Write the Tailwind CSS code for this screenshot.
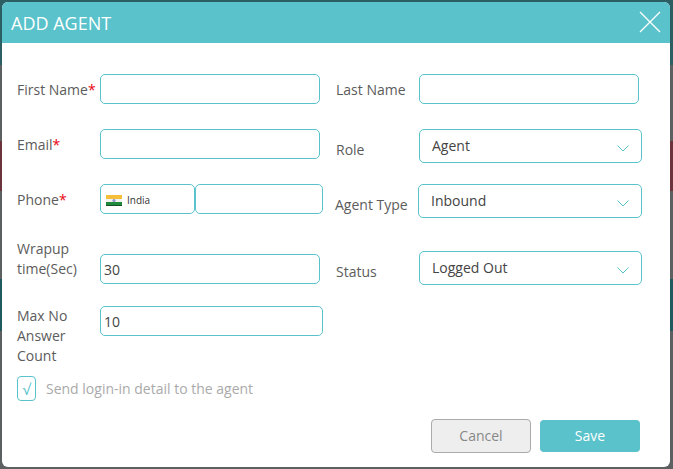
<!doctype html>
<html><head><meta charset="utf-8"><script src="https://cdn.jsdelivr.net/npm/@tailwindcss/browser@4"></script></head>
<body class="relative w-[673px] h-[469px] overflow-hidden bg-[#5c6061] font-['Open_Sans',sans-serif] text-[14px] leading-[20px] text-[#5c5c5c] antialiased">
<div class="absolute inset-0 flex flex-col">
  <div class="h-[65px] bg-[#2b5f63]"></div>
  <div class="h-[76px]"></div>
  <div class="h-[50px] bg-[#6b333b]"></div>
  <div class="h-[88px]"></div>
  <div class="h-[52px] bg-[#1f5a5e]"></div>
</div>
<div class="absolute left-[2px] top-[2px] w-[668px] h-[465px] bg-white rounded-[6px] overflow-hidden flex flex-col">
  <header class="h-[41px] shrink-0 bg-[#59c2cb] flex items-center justify-between px-[9px] text-white">
    <h1 class="text-[18px] leading-none">ADD AGENT</h1>
    <svg class="w-[22px] h-[22px] -mt-[2px]" viewBox="0 0 22 22" fill="none" stroke="white" stroke-width="1.3"><path d="M1 1L21 21M21 1L1 21"/></svg>
  </header>
  <div class="flex pt-[31px] pl-[15px] h-[373px]">
    <div class="w-[318px] flex flex-col">
      <div class="flex h-[30px] items-center mb-[25px]"><span class="w-[83px] shrink-0 pt-[2px]">First Name<span class="text-red-600">*</span></span><input class="w-[220px] h-[30px] border border-[#59c2cb] rounded-[5px]"></div>
      <div class="flex h-[30px] items-center mb-[25px]"><span class="w-[83px] shrink-0 pt-[2px]">Email<span class="text-red-600">*</span></span><input class="w-[220px] h-[30px] border border-[#59c2cb] rounded-[5px]"></div>
      <div class="flex h-[30px] items-center mb-[25px]"><span class="w-[83px] shrink-0 pt-[2px]">Phone<span class="text-red-600">*</span></span>
        <div class="w-[95px] h-[30px] border border-[#59c2cb] rounded-[5px] flex items-center pl-[5px] gap-[5px] text-[10px] text-[#333]">
          <svg class="w-[16px] h-[11px] mt-[2px]" viewBox="0 0 16 11"><rect width="16" height="4" fill="#f6bf3a"/><rect y="4" width="16" height="3" fill="#f2f2f2"/><rect y="7" width="16" height="4" fill="#1f8a3a"/><rect y="10" width="16" height="1" fill="#14532a"/><circle cx="8" cy="5.5" r="1.6" fill="#8f97cc"/></svg>
          <span class="pt-[2px]">India</span>
        </div>
        <input class="w-[128px] h-[30px] border border-[#59c2cb] rounded-[5px]">
      </div>
      <div class="flex h-[40px] mb-[27px]"><span class="w-[83px] shrink-0">Wrapup time(Sec)</span><input value="30" class="w-[220px] h-[30px] mt-[15px] px-[3px] border border-[#59c2cb] rounded-[5px] text-[#444]"></div>
      <div class="flex h-[60px]"><span class="w-[70px] mr-[13px] shrink-0">Max No Answer Count</span><input value="10" class="w-[223px] h-[30px] px-[3px] border border-[#59c2cb] rounded-[5px] text-[#444]"></div>
      <label class="flex items-center gap-[10px] mt-[10px] text-[#aaa]"><span class="w-[19px] h-[25px] border border-[#59c2cb] rounded-[4px] flex items-center justify-center text-[#59c2cb] text-[15px]">√</span>Send login-in detail to the agent</label>
    </div>
    <div class="flex flex-col">
      <div class="flex h-[30px] items-center mb-[25px]"><span class="w-[84px] pl-[1px] shrink-0 pt-[2px]">Last Name</span><input class="w-[220px] h-[30px] border border-[#59c2cb] rounded-[5px]"></div>
      <div class="flex h-[34px] mb-[21px]"><span class="w-[84px] pl-[1px] shrink-0 pt-[11px]">Role</span>
        <div class="w-[223px] h-[34px] border border-[#59c2cb] rounded-[5px] flex justify-between pl-[12px] pr-[12px] pt-[6px] text-[#444]">Agent<svg class="w-[12px] h-[7px] mt-[9px]" viewBox="0 0 12 7" fill="none" stroke="#59c2cb"><path d="M.5.5L6 6L11.5.5"/></svg></div></div>
      <div class="flex h-[34px] mb-[33px]"><span class="w-[83px] shrink-0 pt-[11px]">Agent Type</span>
        <div class="w-[224px] h-[34px] border border-[#59c2cb] rounded-[5px] flex justify-between pl-[12px] pr-[12px] pt-[6px] text-[#444]">Inbound<svg class="w-[12px] h-[7px] mt-[9px]" viewBox="0 0 12 7" fill="none" stroke="#59c2cb"><path d="M.5.5L6 6L11.5.5"/></svg></div></div>
      <div class="flex h-[34px]"><span class="w-[84px] pl-[1px] shrink-0 pt-[11px]">Status</span>
        <div class="w-[223px] h-[34px] border border-[#59c2cb] rounded-[5px] flex justify-between pl-[12px] pr-[12px] pt-[6px] text-[#444]">Logged Out<svg class="w-[12px] h-[7px] mt-[9px]" viewBox="0 0 12 7" fill="none" stroke="#59c2cb"><path d="M.5.5L6 6L11.5.5"/></svg></div></div>
    </div>
  </div>
  <footer class="flex justify-end items-center gap-[9px] pr-[30px] mt-[3px]">
    <button class="w-[100px] h-[34px] bg-[#eee] border border-[#aaa] rounded-[4px] text-[#888]">Cancel</button>
    <button class="w-[100px] h-[32px] bg-[#59c2cb] rounded-[4px] text-white font-medium">Save</button>
  </footer>
</div>
</body></html>
